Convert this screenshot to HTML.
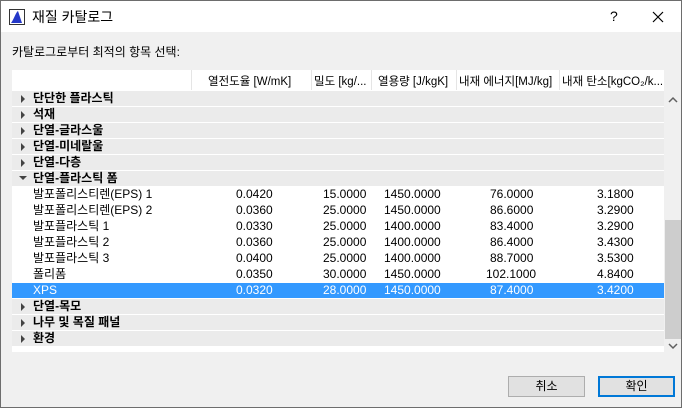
<!DOCTYPE html>
<html><head><meta charset="utf-8"><style>
*{margin:0;padding:0;box-sizing:border-box}
body{width:682px;height:408px;background:#f0f0f0;font-family:"Liberation Sans","Noto Sans CJK KR",sans-serif;font-size:12px;color:#000;position:relative;overflow:hidden;border:1px solid #6d6d6d}
.tb{position:absolute;left:0;top:0;width:680px;height:31px;background:#fff}
.abs{position:absolute;white-space:nowrap}
.hdr{position:absolute;top:69px;height:21px;background:#fff;left:11px;width:652px}
.hc{position:absolute;top:69px;height:20px;line-height:20px;background:#fff;font-size:11.5px}
.row{position:absolute;left:11px;width:652px;height:15px;line-height:15px}
.cat{background:#ebebeb;font-weight:bold}
.dat{background:#fff}
.sel{background:#3399ff;color:#fff}
.tri{position:absolute;left:9px;top:4px;width:0;height:0;border-left:4px solid #444;border-top:4px solid transparent;border-bottom:4px solid transparent}
.trid{position:absolute;left:7px;top:5px;width:0;height:0;border-top:4px solid #444;border-left:4px solid transparent;border-right:4px solid transparent}
.c{position:absolute;top:0}
.btn{position:absolute;top:375px;width:77px;height:21px;background:#e1e1e1;border:1px solid #adadad;text-align:center;line-height:19px}
</style></head><body>
<div class="tb"></div>
<svg class="abs" style="left:8px;top:8px" width="16" height="16"><rect x="0.5" y="0.5" width="15" height="15" fill="#fff" stroke="#333"/><path d="M2 14 C5 10 7 3 9 2 L13 14 Z" fill="#2438c8"/></svg>
<div class="abs" style="left:31px;top:6px;font-size:14px">재질 카탈로그</div>
<div class="abs" style="left:609px;top:7px;font-size:14px">?</div>
<svg class="abs" style="left:651px;top:10px" width="12" height="12"><path d="M1 1L11 11M11 1L1 11" stroke="#000" stroke-width="1.2"/></svg>
<div class="abs" style="left:11px;top:42px">카탈로그로부터 최적의 항목 선택:</div>
<div class="hdr"></div>
<div class="abs" style="left:11px;top:89px;width:652px;height:262px;background:#fff"></div>
<div class="hc" style="left:190px;width:1px;background:#e5e5e5"></div>
<div class="hc" style="left:310px;width:1px;background:#e5e5e5"></div>
<div class="hc" style="left:370px;width:1px;background:#e5e5e5"></div>
<div class="hc" style="left:455px;width:1px;background:#e5e5e5"></div>
<div class="hc" style="left:558px;width:1px;background:#e5e5e5"></div>
<div class="abs" style="left:207px;top:72px;font-size:11.5px">열전도율 [W/mK]</div>
<div class="abs" style="left:313px;top:72px;font-size:11.5px">밀도 [kg/...</div>
<div class="abs" style="left:377px;top:72px;font-size:11.5px">열용량 [J/kgK]</div>
<div class="abs" style="left:458px;top:72px;font-size:11.5px">내재 에너지[MJ/kg]</div>
<div class="abs" style="left:561px;top:72px;font-size:11.5px">내재 탄소[kgCO₂/k...</div>

<div class="row cat" style="top:90px"><span class="tri"></span><span class="c" style="left:21px">단단한 플라스틱</span></div>
<div class="row cat" style="top:106px"><span class="tri"></span><span class="c" style="left:21px">석재</span></div>
<div class="row cat" style="top:122px"><span class="tri"></span><span class="c" style="left:21px">단열-글라스울</span></div>
<div class="row cat" style="top:138px"><span class="tri"></span><span class="c" style="left:21px">단열-미네랄울</span></div>
<div class="row cat" style="top:154px"><span class="tri"></span><span class="c" style="left:21px">단열-다층</span></div>
<div class="row cat" style="top:170px"><span class="trid"></span><span class="c" style="left:21px">단열-플라스틱 폼</span></div>

<div class="row dat" style="top:186px"><span class="c" style="left:21px">발포폴리스티렌(EPS) 1</span><span class="c" style="left:224px">0.0420</span><span class="c" style="left:311px">15.0000</span><span class="c" style="left:372px">1450.0000</span><span class="c" style="left:478px">76.0000</span><span class="c" style="left:585px">3.1800</span></div>
<div class="row dat" style="top:202px"><span class="c" style="left:21px">발포폴리스티렌(EPS) 2</span><span class="c" style="left:224px">0.0360</span><span class="c" style="left:311px">25.0000</span><span class="c" style="left:372px">1450.0000</span><span class="c" style="left:478px">86.6000</span><span class="c" style="left:585px">3.2900</span></div>
<div class="row dat" style="top:218px"><span class="c" style="left:21px">발포플라스틱 1</span><span class="c" style="left:224px">0.0330</span><span class="c" style="left:311px">25.0000</span><span class="c" style="left:372px">1400.0000</span><span class="c" style="left:478px">83.4000</span><span class="c" style="left:585px">3.2900</span></div>
<div class="row dat" style="top:234px"><span class="c" style="left:21px">발포플라스틱 2</span><span class="c" style="left:224px">0.0360</span><span class="c" style="left:311px">25.0000</span><span class="c" style="left:372px">1400.0000</span><span class="c" style="left:478px">86.4000</span><span class="c" style="left:585px">3.4300</span></div>
<div class="row dat" style="top:250px"><span class="c" style="left:21px">발포플라스틱 3</span><span class="c" style="left:224px">0.0400</span><span class="c" style="left:311px">25.0000</span><span class="c" style="left:372px">1400.0000</span><span class="c" style="left:478px">88.7000</span><span class="c" style="left:585px">3.5300</span></div>
<div class="row dat" style="top:266px"><span class="c" style="left:21px">폴리폼</span><span class="c" style="left:224px">0.0350</span><span class="c" style="left:311px">30.0000</span><span class="c" style="left:372px">1450.0000</span><span class="c" style="left:474px">102.1000</span><span class="c" style="left:585px">4.8400</span></div>
<div class="row sel" style="top:282px"><span class="c" style="left:21px">XPS</span><span class="c" style="left:224px">0.0320</span><span class="c" style="left:311px">28.0000</span><span class="c" style="left:372px">1450.0000</span><span class="c" style="left:478px">87.4000</span><span class="c" style="left:585px">3.4200</span></div>

<div class="row cat" style="top:298px"><span class="tri"></span><span class="c" style="left:21px">단열-목모</span></div>
<div class="row cat" style="top:314px"><span class="tri"></span><span class="c" style="left:21px">나무 및 목질 패널</span></div>
<div class="row cat" style="top:330px"><span class="tri"></span><span class="c" style="left:21px">환경</span></div>

<div class="abs" style="left:663px;top:90px;width:17px;height:261px;background:#f0f0f0"></div>
<div class="abs" style="left:664px;top:219px;width:16px;height:119px;background:#cdcdcd"></div>
<svg class="abs" style="left:667px;top:95px" width="10" height="8"><path d="M1 6L5 2L9 6" stroke="#606060" stroke-width="1.5" fill="none"/></svg>
<svg class="abs" style="left:667px;top:341px" width="10" height="8"><path d="M1 2L5 6L9 2" stroke="#606060" stroke-width="1.5" fill="none"/></svg>

<div class="btn" style="left:507px">취소</div>
<div class="btn" style="left:597px;border:2px solid #0078d7;line-height:17px">확인</div>
</body></html>
